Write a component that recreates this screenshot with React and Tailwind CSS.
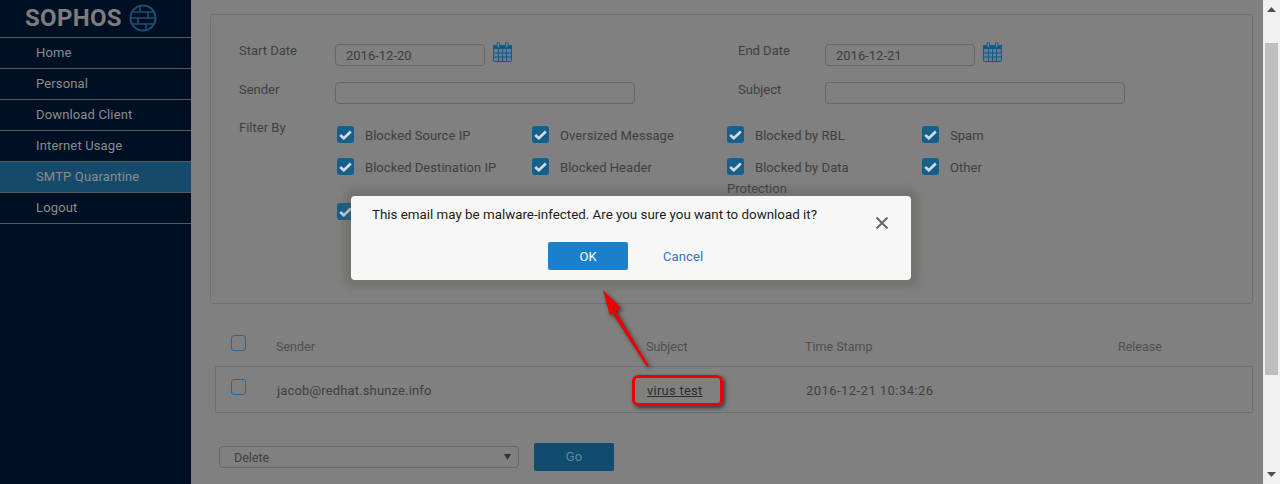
const navItems = ['Home', 'Personal', 'Download Client', 'Internet Usage', 'SMTP Quarantine', 'Logout'];

function Tick() {
  return (
    <svg width="13" height="10" viewBox="0 0 13 10" fill="none">
      <path d="M1.2 5 4.800 8.300 11.800 1.500" stroke="#d6dadd" strokeWidth="2.600" />
    </svg>
  );
}

function CheckBox({ checked }) {
  if (checked) {
    return (
      <span className="w-[17px] h-[17px] shrink-0 rounded-[3px] bg-[#155f8d] flex items-center justify-center">
        <Tick />
      </span>
    );
  }
  return <span className="block w-[15px] h-[16px] rounded-[3px] border border-[#2f6590]" />;
}

function CalendarIcon() {
  return (
    <svg width="19" height="20" viewBox="0 0 19 20" fill="none" className="ml-[8px] -mt-[2px]">
      <rect x="0.500" y="3.500" width="18" height="16" rx="1" fill="#5f7f96" stroke="#14598a" />
      <rect x="0" y="3" width="19" height="4" fill="#14598a" />
      <rect x="4" y="0.500" width="2.500" height="5" rx="1.200" fill="#808080" stroke="#14598a" />
      <rect x="12.500" y="0.500" width="2.500" height="5" rx="1.200" fill="#808080" stroke="#14598a" />
      <path d="M1 11h17M1 15h17M5.500 7v12M9.500 7v12M13.500 7v12" stroke="#14598a" />
    </svg>
  );
}

function SophosGlobe() {
  return (
    <svg width="28" height="28" viewBox="0 0 28 28" fill="none" stroke="#1c4f72" strokeWidth="2">
      <circle cx="14" cy="14" r="12.500" />
      <path d="M4 8h20M2 14h24M4 20h20M11 2v6M19 8v6M9 14v6M17 20v6" strokeWidth="1.600" />
    </svg>
  );
}

function FilterItem({ label, wrap, className }) {
  return (
    <div className={className}>
      <div className="flex">
        <CheckBox checked />
        {label && <span className="ml-[11px] leading-[18px] pt-[1px] tracking-[0.05px]">{label}</span>}
      </div>
      {wrap && <div className="mt-[3px] leading-[18px]">{wrap}</div>}
    </div>
  );
}

function Sidebar() {
  return (
    <aside className="w-[191px] shrink-0 bg-[#001024]">
      <div className="h-[38px] pl-[25px] pt-[4px] flex items-start gap-[7px] border-b border-[#555a5e]">
        <span className="text-[24px] leading-[28px] font-bold text-[#7d7d7d] tracking-[0.3px]">SOPHOS</span>
        <SophosGlobe />
      </div>
      {navItems.map((item) => (
        <div
          key={item}
          className={`h-[31px] pl-[36px] flex items-center text-[13px] tracking-[0.15px] border-b border-[#555a5e] text-[#8c8c8c] ${
            item === 'SMTP Quarantine' ? 'bg-[#164a6b]' : ''
          }`}
        >
          {item}
        </div>
      ))}
    </aside>
  );
}

function FilterPanel() {
  return (
    <section className="h-[290px] border border-[#707070] rounded-[3px] pt-[29px] pl-[28px]">
      <div className="flex h-[38px]">
        <label className="w-[96px] leading-[14px]">Start Date</label>
        <div className="w-[150px] h-[22px] border border-[#666] rounded-[4px] pl-[10px] leading-[21px] text-[#3d3d3d]">2016-12-20</div>
        <CalendarIcon />
        <label className="ml-[226px] w-[87px] leading-[14px]">End Date</label>
        <div className="w-[150px] h-[22px] border border-[#666] rounded-[4px] pl-[10px] leading-[21px] text-[#3d3d3d]">2016-12-21</div>
        <CalendarIcon />
      </div>
      <div className="flex h-[22px]">
        <label className="w-[96px] leading-[14px] pt-[1px]">Sender</label>
        <div className="w-[300px] h-[22px] border border-[#666] rounded-[4px]" />
        <label className="ml-[103px] w-[87px] leading-[14px] pt-[1px]">Subject</label>
        <div className="w-[300px] h-[22px] border border-[#666] rounded-[4px]" />
      </div>
      <div className="flex mt-[16px]">
        <label className="w-[98px] leading-[16px] shrink-0">Filter By</label>
        <div className="w-[780px] grid grid-cols-[195px_195px_195px_195px] pt-[6px]">
          <FilterItem label="Blocked Source IP" className="h-[32px]" />
          <FilterItem label="Oversized Message" className="h-[32px]" />
          <FilterItem label="Blocked by RBL" className="h-[32px]" />
          <FilterItem label="Spam" className="h-[32px]" />
          <FilterItem label="Blocked Destination IP" className="h-[45px]" />
          <FilterItem label="Blocked Header" className="h-[45px]" />
          <FilterItem label="Blocked by Data" wrap="Protection" className="h-[45px]" />
          <FilterItem label="Other" className="h-[45px]" />
          <FilterItem />
        </div>
      </div>
    </section>
  );
}

function ResultTable() {
  return (
    <section className="mt-[30px] ml-[5px]">
      <div className="flex h-[32px] text-[12.500px] text-[#4f4f4f]">
        <div className="w-[61px] pl-[16px] pt-[1px]"><CheckBox /></div>
        <div className="w-[370px] pt-[4px]">Sender</div>
        <div className="w-[159px] pt-[4px]">Subject</div>
        <div className="w-[313px] pt-[4px]">Time Stamp</div>
        <div className="pt-[4px]">Release</div>
      </div>
      <div className="flex h-[47px] border border-[#707070]">
        <div className="w-[60px] pl-[15px] pt-[12px]"><CheckBox /></div>
        <div className="w-[370px] pl-[1px] pt-[14px] tracking-[0.15px]">jacob@redhat.shunze.info</div>
        <div className="w-[159px] pl-[1px] pt-[14px] text-[#2e2e2e] underline tracking-[0.25px]">virus test</div>
        <div className="pl-[1px] pt-[14px] tracking-[0.45px]">2016-12-21 10:34:26</div>
      </div>
    </section>
  );
}

function ConfirmDialog() {
  return (
    <div className="absolute left-[351px] top-[196px] w-[560px] h-[84px] bg-[#f7f7f7] rounded-[4px] shadow-[0_0_6px_8px_rgba(90,90,70,0.3)] px-[21px] pt-[10px] text-[#1c1c1c]">
      <div className="flex h-[36px]">
        <p className="text-[13.350px] leading-[18px]">This email may be malware-infected. Are you sure you want to download it?</p>
        <svg width="14" height="14" viewBox="0 0 14 14" className="ml-auto mr-[1px] mt-[10px]" stroke="#666" strokeWidth="2">
          <path d="M1.500 1.500 12.500 12.500M12.500 1.500 1.500 12.500" />
        </svg>
      </div>
      <div className="flex items-center ml-[176px]">
        <button className="w-[80px] h-[28px] pt-[1px] bg-[#1a80cc] rounded-[2px] text-white text-[13px] font-normal">OK</button>
        <a className="ml-[35px] pt-[1px] text-[13px] tracking-[0.1px] text-[#2d78c4]">Cancel</a>
      </div>
    </div>
  );
}

function Annotation() {
  return (
    <>
      <div className="absolute left-[632px] top-[375px] w-[91px] h-[31px] border-[3px] border-[#ee0000] rounded-[6px] shadow-[2px_2px_4px_rgba(0,0,0,0.6)]" />
      <svg className="absolute left-0 top-0 pointer-events-none drop-shadow-[2px_2px_2px_rgba(0,0,0,0.55)]" width="1280" height="484" fill="#ee0000">
        <path d="M603 290 621 308 615.500 310.500 649 366 647 367 612 312.500 610 316Z" />
      </svg>
    </>
  );
}

function ScrollBar() {
  return (
    <div className="w-[17px] shrink-0 bg-[#f0f0f0] flex flex-col items-center">
      <svg width="9" height="5" viewBox="0 0 9 5" className="mt-[7px]" fill="#505050"><path d="M4.500 0 9 5H0Z" /></svg>
      <div className="w-[13px] h-[332px] mt-[31px] bg-[#bebebe]" />
      <svg width="9" height="5" viewBox="0 0 9 5" className="mt-auto mb-[7px]" fill="#505050"><path d="M0 0H9L4.500 5Z" /></svg>
    </div>
  );
}

export default function App() {
  return (
    <div
      className="relative flex w-[1280px] h-[484px] overflow-hidden bg-[#808080] text-[13px] text-[#3f3f3f]"
      style={{ fontFamily: 'Roboto, sans-serif' }}
    >
      <Sidebar />
      <main className="flex-1 pl-[19px] pr-[10px] pt-[14px]">
        <FilterPanel />
        <ResultTable />
        <div className="flex items-center mt-[30px] ml-[9px]">
          <div className="relative w-[300px] h-[22px] border border-[#666] rounded-[4px] pl-[14px] leading-[21px] text-[12.500px]">
            Delete
            <svg width="7" height="6" viewBox="0 0 7 6" className="absolute right-[7px] top-[7px]" fill="#333"><path d="M0 0H7L3.500 6Z" /></svg>
          </div>
          <button className="ml-[15px] w-[80px] h-[28px] bg-[#104c6e] rounded-[2px] text-[#5c8aa6] text-[13px]">Go</button>
        </div>
      </main>
      <ScrollBar />
      <ConfirmDialog />
      <Annotation />
    </div>
  );
}
